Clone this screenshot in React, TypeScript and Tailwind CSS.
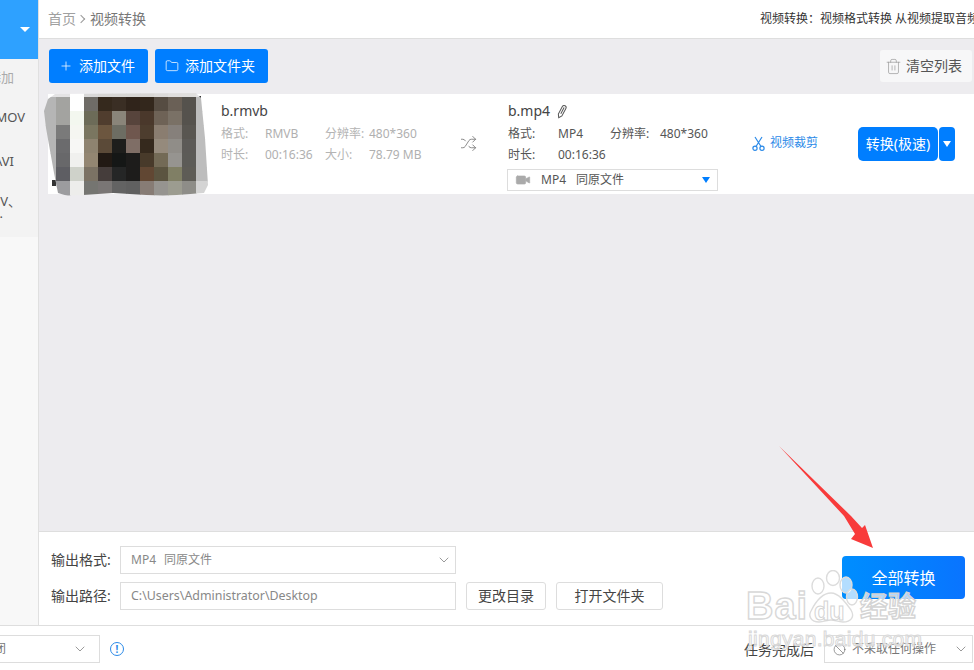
import { ChevronDown, Folder, Plus, Shuffle, Trash2, Video, Ban } from "lucide-react"

const pixels = [
  ["#e4e3e4", "#e4e3e4", "#ffffff", "#d9d8d8", "#d8d6d4", "#d8d6d4", "#d8d6d4", "#d8d6d4", "#dcdad9", "#e0dedd", "#e0dfde", "#e4e3e4"],
  ["#b5b5b5", "#a3a3a0", "#ffffff", "#6f6c67", "#35291d", "#3a2e24", "#30241b", "#33271c", "#564c42", "#6a6056", "#55524d", "#bdbdbd"],
  ["#b5b5b5", "#a3a3a0", "#f3f7ef", "#6c6b58", "#503d2e", "#8a857a", "#57443c", "#4a382b", "#6e6256", "#7a7166", "#55524d", "#bdbdbd"],
  ["#b5b5b5", "#7a7a7a", "#f5f6f1", "#7a7660", "#6c563f", "#6d6d63", "#6f574e", "#4d3d2e", "#8a7d70", "#86807b", "#595651", "#bdbdbd"],
  ["#b5b5b5", "#6b6b6d", "#f7f7f5", "#8e8370", "#5b4a38", "#1e1e1c", "#7f6e66", "#35291d", "#958a7c", "#908d88", "#5c5a57", "#bdbdbd"],
  ["#b5b5b5", "#68686a", "#f0f0ee", "#938672", "#221a14", "#151716", "#1d1c1b", "#483a2a", "#736a56", "#969490", "#5c5b57", "#bdbdbd"],
  ["#b5b5b5", "#5e5e63", "#cfd2ca", "#7b7264", "#453d3b", "#252626", "#1d1c1b", "#614733", "#5b5440", "#807f65", "#5e5c56", "#bdbdbd"],
  ["#9d9d9d", "#9c9c9f", "#ededeb", "#757571", "#7a7675", "#636363", "#606060", "#877c75", "#969490", "#9c9c90", "#8e8d88", "#d4d4d4"],
]

function Thumbnail() {
  return (
    <svg width="170" height="104" viewBox="0 0 170 104" className="shrink-0 -ml-[5px] -mt-[1px]">
      <defs>
        <clipPath id="thumb">
          <polygon points="5,6 12,1 153,0 158,5 162,45 165,92 161,100 120,103 70,100 25,103 15,100 11,80 3,35 1,18" />
        </clipPath>
      </defs>
      <rect x="153" y="3" width="5" height="5" fill="#333" />
      <rect x="9" y="87" width="4" height="6" fill="#333" />
      <g clipPath="url(#thumb)">
        {pixels.map((row, r) =>
          row.map((c, i) => (
            <rect key={`${r}-${i}`} x={i * 14 - 1} y={r === 0 ? 0 : 4 + (r - 1) * 14} width="14.5" height={r === 0 ? 4.5 : 14.5} fill={c} />
          ))
        )}
      </g>
    </svg>
  )
}

function ScissorsIcon() {
  return (
    <svg width="13" height="15" viewBox="0 0 13 15" fill="none" stroke="#2b8ae8" strokeWidth="1.2" className="shrink-0">
      <circle cx="3" cy="12.3" r="2.1" />
      <circle cx="10" cy="12.3" r="2.1" />
      <path d="M4 10.5 10 1M9 10.5 3 1" />
    </svg>
  )
}

function PencilIcon() {
  return (
    <svg width="12" height="15" viewBox="0 0 12 15" fill="none" stroke="#555" strokeWidth="1" className="shrink-0">
      <g transform="rotate(28 6 7.5)">
        <path d="M4 3a2 2 0 0 1 4 0v8.5L6 14.5l-2-3z" />
        <path d="M6 3v7" />
      </g>
    </svg>
  )
}

function InfoRow({ items, label, value }: { items: [string, string, number, number][]; label: string; value: string }) {
  return (
    <div className={`flex h-[21px] items-center text-xs ${label} whitespace-nowrap`}>
      {items.map(([a, b, w, vw], i) => (
        <div key={i} className="flex">
          <span style={{ width: w }}>{a}</span>
          <span className={value} style={{ width: vw }}>{b}</span>
        </div>
      ))}
    </div>
  )
}

function Watermark() {
  return (
    <div className="absolute left-[746px] top-[570px] w-[180px] h-[76px] pointer-events-none">
      <svg width="110" height="56" viewBox="0 0 110 56" className="absolute left-[50px] top-0">
        <g fill="#ffffff" fillOpacity="0.7" stroke="#dcdcdc" strokeWidth="1.4">
          <ellipse cx="22" cy="16" rx="6" ry="8" />
          <ellipse cx="37" cy="8" rx="6.5" ry="7.5" />
          <ellipse cx="50" cy="15" rx="6" ry="8" />
          <ellipse cx="56" cy="27" rx="5.5" ry="8" />
          <path d="M35 23c8 0 15 10 20 17 4 7 0 12-8 12-5 0-8-2-12-2s-7 2-12 2c-8 0-11-6-8-11 4-8 11-18 20-18z" />
        </g>
      </svg>
      <span className="absolute left-0 top-[14px] text-[38px] leading-[44px] font-bold tracking-[1px] text-white/70 [-webkit-text-stroke:1.4px_#d8d8d8] font-['Liberation_Sans',sans-serif]">
        Bai
      </span>
      <span className="absolute left-[68px] top-[27px] text-[25px] leading-[28px] font-bold text-white/60 [-webkit-text-stroke:1px_#d4d4d4] font-['Liberation_Sans',sans-serif]">
        du
      </span>
      <span className="absolute left-[114px] top-[18px] text-[28px] leading-[36px] font-bold text-white/70 [-webkit-text-stroke:1.4px_#d4d4d4]">
        经验
      </span>
      <span className="absolute left-[2px] top-[57px] text-[21px] leading-[24px] tracking-[0.3px] text-white/70 [-webkit-text-stroke:1px_#d8d8d8] font-['Liberation_Sans',sans-serif]">
        jingyan.baidu.com
      </span>
    </div>
  )
}

export default function App() {
  return (
    <div className="relative w-[974px] h-[670px] overflow-hidden bg-white flex flex-col font-['Noto_Sans','Noto_Sans_CJK_SC',sans-serif] text-[#444]">
      <div className="flex h-[625px] shrink-0">
        {/* Sidebar */}
        <div className="w-[39px] shrink-0 border-r border-[#e0e0e0] bg-[#f8f8f8] flex flex-col">
          <div className="h-[59px] bg-[#2ea1ff] flex items-center justify-end pr-[8px]">
            <div className="w-0 h-0 border-x-[5px] border-x-transparent border-t-[5px] border-t-white" />
          </div>
          <div className="h-[178px] bg-[#f3f3f3] overflow-hidden text-[13px] whitespace-nowrap">
            <div className="h-[38px] flex items-center justify-end pr-[24px] text-[#aaa]">添加</div>
            <div className="h-[42px] flex items-center justify-end pr-[13px] text-[#555]">MOV</div>
            <div className="h-[46px] flex items-center justify-end pr-[24px] text-[#555]">AVI</div>
            <div className="h-[34px] flex items-center justify-end pr-[17px] text-[#555]">V、</div>
            <div className="h-[16px] -mt-[13px] flex items-center justify-end pr-[35px] text-[#555]">.</div>
          </div>
        </div>

        {/* Main */}
        <div className="flex-1 min-w-0 flex flex-col bg-[#edecef]">
          <div className="h-[39px] shrink-0 bg-white border-b border-[#dedede] flex items-center pl-[9px] overflow-hidden whitespace-nowrap">
            <span className="text-sm text-[#a0a0a0]">首页</span>
            <span className="ml-[2px] mr-[6px] shrink-0 w-[6px] h-[6px] border-t border-r border-[#999] rotate-45" />
            <span className="text-sm text-[#777]">视频转换</span>
            <span className="ml-[614px] text-xs text-[#333]">视频转换：视频格式转换 从视频提取音频</span>
          </div>

          {/* Toolbar */}
          <div className="h-[55px] shrink-0 flex items-start pt-[10px] pl-[10px] pr-[2px] text-sm">
            <button className="h-[34px] w-[99px] bg-[#007eff] rounded-[3px] text-white flex items-center pl-[10px] gap-[6px]">
              <Plus size={14} strokeWidth={1.3} />
              添加文件
            </button>
            <button className="h-[34px] w-[113px] ml-[7px] bg-[#007eff] rounded-[3px] text-white flex items-center pl-[10px] gap-[6px]">
              <Folder size={14} strokeWidth={1.3} />
              添加文件夹
            </button>
            <button className="ml-auto mt-[1px] h-[32px] w-[92px] bg-[#f7f7f8] rounded-[3px] text-[#555] flex items-center pl-[5px] gap-[4px]">
              <Trash2 size={17} strokeWidth={1} className="text-[#999]" />
              清空列表
            </button>
          </div>

          {/* File list */}
          <div className="flex-1 min-h-0 pl-[9px]">
            <div className="h-[100px] bg-white flex items-start">
              <Thumbnail />
              <div className="w-[247px] shrink-0 pl-[8px] pt-[7px]">
                <div className="text-sm leading-[20px] text-[#444] mb-[2px]">b.rmvb</div>
                <InfoRow label="text-[#b4b4b4]" value="text-[#b0b0b0]" items={[["格式:", "RMVB", 44, 60], ["分辨率:", "480*360", 44, 60]]} />
                <InfoRow label="text-[#b4b4b4]" value="text-[#b0b0b0]" items={[["时长:", "00:16:36", 44, 60], ["大小:", "78.79 MB", 44, 60]]} />
              </div>
              <div className="w-[48px] shrink-0 pt-[41px]">
                <Shuffle size={17} strokeWidth={1.2} className="text-[#777]" />
              </div>
              <div className="w-[243px] shrink-0 pt-[7px]">
                <div className="flex items-center gap-[6px] text-sm leading-[20px] mb-[2px]">
                  b.mp4
                  <PencilIcon />
                </div>
                <InfoRow label="text-[#555]" value="text-[#555]" items={[["格式:", "MP4", 50, 52], ["分辨率:", "480*360", 50, 60]]} />
                <InfoRow label="text-[#555]" value="text-[#555]" items={[["时长:", "00:16:36", 50, 60]]} />
                <div className="-ml-[1px] mt-[4px] w-[211px] h-[22px] border border-[#ddd] flex items-center pl-[7px] pr-[7px] text-xs text-[#555]">
                  <Video size={16} fill="#aaa" className="text-[#aaa] mr-[10px]" strokeWidth={1} />
                  <span>MP4</span>
                  <span className="ml-[10px]">同原文件</span>
                  <div className="ml-auto w-0 h-0 border-x-[4px] border-x-transparent border-t-[6px] border-t-[#007eff]" />
                </div>
              </div>
              <div className="w-[107px] shrink-0 pt-[41px] pl-[1px] flex items-center gap-[5px] text-xs text-[#2b8ae8] whitespace-nowrap">
                <ScissorsIcon />
                视频裁剪
              </div>
              <div className="pt-[33px] flex gap-[1px]">
                <button className="w-[80px] h-[34px] bg-[#007eff] rounded-[5px] text-sm text-white">转换(极速)</button>
                <button className="w-[16px] h-[34px] bg-[#007eff] rounded-[4px] flex items-center justify-center">
                  <div className="w-0 h-0 border-x-[4px] border-x-transparent border-t-[6px] border-t-white" />
                </button>
              </div>
            </div>
          </div>

          {/* Output settings */}
          <div className="h-[94px] shrink-0 bg-white border-t border-[#dedede] flex items-start pl-[12px] pr-[9px] pt-[14px] text-sm">
            <div className="flex flex-col gap-[8px]">
              <div className="flex items-center h-[28px]">
                <span className="w-[69px] text-[#444]">输出格式:</span>
                <div className="w-[336px] h-[28px] border border-[#dddddd] flex items-center pl-[10px] pr-[3px] text-xs text-[#888]">
                  <span>MP4</span>
                  <span className="ml-[8px]">同原文件</span>
                  <ChevronDown size={16} strokeWidth={1} className="ml-auto text-[#666]" />
                </div>
              </div>
              <div className="flex items-center h-[28px]">
                <span className="w-[69px] text-[#444]">输出路径:</span>
                <div className="w-[336px] h-[28px] border border-[#dddddd] flex items-center pl-[10px] text-[12.4px] text-[#888]">
                  C:\Users\Administrator\Desktop
                </div>
                <button className="ml-[10px] w-[80px] h-[28px] border border-[#dddddd] rounded-[3px] text-[#444]">更改目录</button>
                <button className="ml-[10px] w-[107px] h-[28px] border border-[#dddddd] rounded-[3px] text-[#444]">打开文件夹</button>
              </div>
            </div>
            <button className="ml-auto mt-[10px] w-[123px] h-[43px] rounded-[4px] bg-gradient-to-r from-[#008eff] to-[#0a74ff] text-base text-white">全部转换</button>
          </div>
        </div>
      </div>

      {/* Footer */}
      <div className="flex-1 border-t border-[#dedede] flex items-start pt-[9px] text-sm">
        <div className="-ml-[20px] w-[120px] h-[28px] border border-[#dddddd] flex items-center pl-[1px] pr-[11px] text-xs text-[#777]">
          关闭
          <ChevronDown size={16} strokeWidth={1} className="ml-auto text-[#666]" />
        </div>
        <div className="ml-[10px] mt-[7px] w-[14px] h-[14px] rounded-full border border-[#2b8ae8] flex items-center justify-center text-[10px] leading-none font-bold text-[#2b8ae8]">!</div>
        <span className="ml-auto leading-[28px] mt-[1px] text-[#444]">任务完成后</span>
        <div className="ml-[10px] mr-[1px] w-[149px] h-[28px] border border-[#dddddd] flex items-center pl-[8px] pr-[3px] text-xs text-[#777]">
          <Ban size={13} strokeWidth={1.2} className="mr-[6px] text-[#666]" />
          不采取任何操作
          <ChevronDown size={16} strokeWidth={1} className="ml-auto text-[#666]" />
        </div>
      </div>

      <Watermark />

      {/* Annotation arrow */}
      <svg width="974" height="670" className="absolute inset-0 pointer-events-none">
        <polygon points="779,446 844,516 855,534 851,539 873,548 865,525 862,528 851,516" fill="#f83b3b" />
      </svg>
    </div>
  )
}
